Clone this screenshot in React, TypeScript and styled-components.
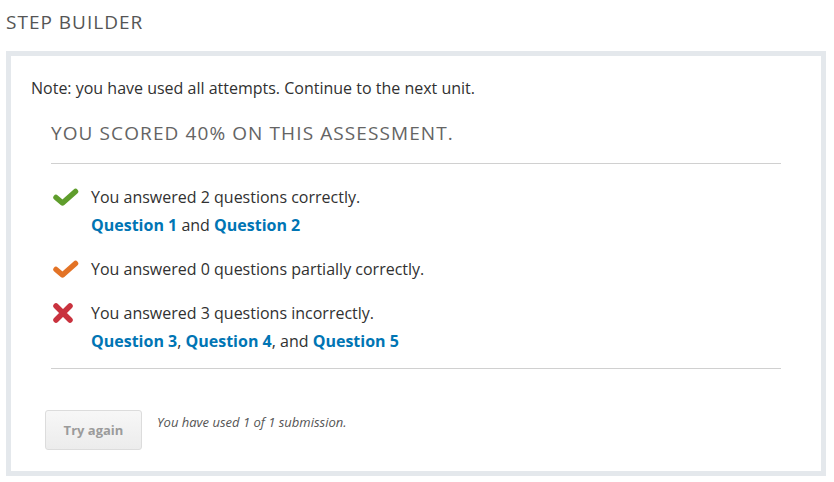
import styled, { createGlobalStyle } from "styled-components";

const GlobalStyle = createGlobalStyle`
  body {
    margin: 0;
    background: #fff;
    font-family: "Open Sans", "Liberation Sans", sans-serif;
    color: #313131;
  }
`;

const Page = styled.div`
  padding: 10px 8px 0 6px;
`;

const PageTitle = styled.h2`
  margin: 0 0 16px;
  font-size: 19px;
  line-height: 25px;
  font-weight: 400;
  letter-spacing: 1px;
  color: #555;
`;

const Frame = styled.div`
  width: 820px;
  box-sizing: border-box;
  border: 5px solid #e4e8ec;
  padding: 21px 20px 21px;
`;

const Note = styled.p`
  margin: 0 0 22px;
  font-size: 16px;
  line-height: 22px;
`;

const Results = styled.div`
  margin: 0 20px;
`;

const ScoreTitle = styled.h3`
  margin: 0;
  padding-bottom: 17px;
  border-bottom: 1px solid #d0d0d0;
  font-size: 19px;
  line-height: 25px;
  font-weight: 400;
  letter-spacing: 1.1px;
  color: #646464;
`;

const List = styled.ul`
  list-style: none;
  margin: 0;
  padding: 19px 0 13px;
  border-bottom: 1px solid #d0d0d0;
`;

const Item = styled.li`
  display: flex;
  align-items: flex-start;
  & + & {
    margin-top: 16px;
  }
`;

const IconSlot = styled.span`
  flex: 0 0 39px;
  height: 28px;
  display: flex;
  align-items: center;
  padding-left: 1px;
`;

const ItemText = styled.div`
  font-size: 16px;
  line-height: 28px;
`;

const QLink = styled.a`
  color: #0075b4;
  font-weight: 700;
  text-decoration: none;
`;

const Actions = styled.div`
  display: flex;
  align-items: flex-start;
  gap: 15px;
  margin: 41px 0 0 14px;
`;

const RetryButton = styled.button`
  width: 97px;
  height: 40px;
  border: 1px solid #dcdcdc;
  border-radius: 3px;
  background: linear-gradient(#f7f7f7, #ececec);
  color: #9b9b9b;
  font-family: "Open Sans", "Liberation Sans", sans-serif;
  font-size: 13px;
  font-weight: 700;
  cursor: default;
`;

const Attempts = styled.span`
  font-size: 13px;
  font-style: italic;
  line-height: 24px;
  color: #555;
`;

const Check = ({ color }: { color: string }) => (
  <svg width="27" height="18" viewBox="0 0 27 18">
    <polyline
      points="4,9.5 10.5,15 23.5,3.5"
      fill="none"
      stroke={color}
      strokeWidth="5.5"
      strokeLinecap="round"
      strokeLinejoin="round"
    />
  </svg>
);

const Cross = () => (
  <svg width="22" height="22" viewBox="0 0 22 22">
    <path
      d="M4 4 L18 18 M18 4 L4 18"
      fill="none"
      stroke="#c9323e"
      strokeWidth="5.5"
      strokeLinecap="round"
    />
  </svg>
);

const App = () => (
  <>
    <GlobalStyle />
    <Page>
      <PageTitle>STEP BUILDER</PageTitle>
      <Frame>
        <Note>Note: you have used all attempts. Continue to the next unit.</Note>
        <Results>
          <ScoreTitle>YOU SCORED 40% ON THIS ASSESSMENT.</ScoreTitle>
          <List>
            <Item>
              <IconSlot>
                <Check color="#5f9d2c" />
              </IconSlot>
              <ItemText>
                You answered 2 questions correctly.
                <br />
                <QLink href="#">Question 1</QLink> and <QLink href="#">Question 2</QLink>
              </ItemText>
            </Item>
            <Item>
              <IconSlot>
                <Check color="#e37326" />
              </IconSlot>
              <ItemText>You answered 0 questions partially correctly.</ItemText>
            </Item>
            <Item>
              <IconSlot>
                <Cross />
              </IconSlot>
              <ItemText>
                You answered 3 questions incorrectly.
                <br />
                <QLink href="#">Question 3</QLink>, <QLink href="#">Question 4</QLink>, and{" "}
                <QLink href="#">Question 5</QLink>
              </ItemText>
            </Item>
          </List>
        </Results>
        <Actions>
          <RetryButton disabled>Try again</RetryButton>
          <Attempts>You have used 1 of 1 submission.</Attempts>
        </Actions>
      </Frame>
    </Page>
  </>
);

export default App;
